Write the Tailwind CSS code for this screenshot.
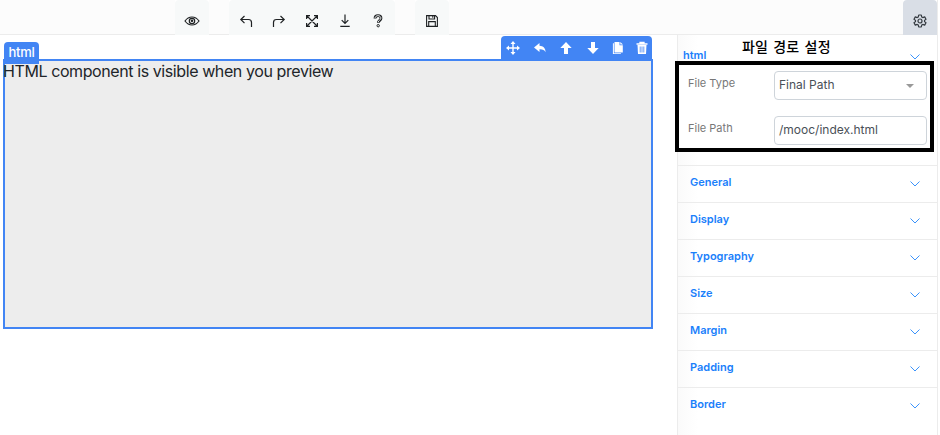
<!DOCTYPE html>
<html lang="ko">
<head>
<meta charset="utf-8">
<title>Page editor</title>
<script src="https://cdn.jsdelivr.net/npm/@tailwindcss/browser@4"></script>
</head>
<body class="w-[940px] h-[435px] overflow-hidden bg-white font-['Inter','Noto_Sans_CJK_KR',sans-serif] text-[#212529]">
<svg class="hidden">
  <symbol id="chev" viewBox="0 0 10 6"><path d="M.5 .5 5 5 9.500 .5" fill="none" stroke="#3b93fb" stroke-width="1"/></symbol>
</svg>
<div class="flex flex-col h-full">
  <header class="flex h-[35px] shrink-0 text-[#1f2224]">
    <div class="w-[175px] bg-[#fcfcfc] border-b border-[#ececec]"></div>
    <div class="w-[34px] bg-[#f7f9f9] rounded-t flex justify-center pt-[14px]">
      <svg class="w-[16px] h-[14px]" viewBox="0 0 16 14" fill="none" stroke="currentColor" stroke-width="1.200"><path d="M1 7C3 4.200 5.300 3 8 3s5 1.200 7 4c-2 2.800-4.300 4-7 4S3 9.800 1 7Z"/><circle cx="8" cy="7" r="2.700"/><circle cx="8" cy="6.800" r=".7" fill="currentColor"/></svg>
    </div>
    <div class="w-[20px] bg-[#fcfcfc] border-b border-[#ececec]"></div>
    <div class="w-[166px] bg-[#f7f9f9] rounded-t flex pt-[14px] pl-[10px] gap-[19px]">
      <svg class="w-[14px] h-[14px]" viewBox="0 0 14 14" fill="none" stroke="currentColor" stroke-width="1.200"><path d="M5.500 2 1.800 5.500l3.700 3.700M1.800 5.500H9.500q3 0 3 3V13"/></svg>
      <svg class="w-[14px] h-[14px]" viewBox="0 0 14 14" fill="none" stroke="currentColor" stroke-width="1.200"><path d="M8.500 2l3.700 3.500-3.700 3.700M12.200 5.500H4.500q-3 0-3 3V13"/></svg>
      <svg class="w-[14px] h-[14px]" viewBox="0 0 14 14" fill="none" stroke="currentColor" stroke-width="1.200"><path d="M1.600 5V1.600H5M9 1.600h3.400V5M12.400 9v3.400H9M5 12.400H1.600V9M2 2l10 10M12 2 2 12"/></svg>
      <svg class="w-[14px] h-[14px]" viewBox="0 0 14 14" fill="none" stroke="currentColor" stroke-width="1.200"><path d="M7 .5V9.500M3.700 6.200 7 9.500l3.300-3.300M2.300 12.400h9.400"/></svg>
      <svg class="w-[14px] h-[14px]" viewBox="0 0 14 14" fill="none"><path d="M4 4.500C4 2.500 5.300 1.600 7 1.600s3 1 3 2.600c0 2.200-2.700 2-2.700 4.500" stroke="#1f2224" stroke-width="2.800"/><path d="M4 4.100C4.200 2.500 5.500 1.700 7 1.700s2.900.9 2.900 2.400c0 2.100-2.600 2-2.600 4" stroke="#f7f9f9" stroke-width=".9"/><circle cx="7.200" cy="11.700" r="1.200" stroke="#1f2224" stroke-width="1"/></svg>
    </div>
    <div class="w-[20px] bg-[#fcfcfc] border-b border-[#ececec]"></div>
    <div class="w-[34px] bg-[#f7f9f9] rounded-t flex justify-center pt-[14px]">
      <svg class="w-[14px] h-[14px]" viewBox="0 0 14 14" fill="none" stroke="currentColor" stroke-width="1.100"><path d="M1.600 1.600h8.900l1.900 1.900v8.900H1.600ZM4 1.600V5h5.600V1.600M7.800 1.800v2M3.700 12.400V7.600h6.600v4.800"/></svg>
    </div>
    <div class="grow bg-[#fcfcfc] border-b border-[#ececec]"></div>
    <div class="w-[34px] bg-[#d9dee6] rounded-t flex justify-center pt-[14px]">
      <svg class="w-[14px] h-[14px]" viewBox="0 0 14 14" fill="none" stroke="#343a40" stroke-width="1.200" stroke-linejoin="round"><path d="M5.700 1h2.600l.4 1.900 1.100.7 1.900-.7 1.300 2.300-1.500 1.200v1.200L13 8.800l-1.300 2.300-1.900-.7-1.100.7-.4 1.900H5.700l-.4-1.900-1.100-.7-1.900.7L1 8.800l1.500-1.200V6.400L1 5.200l1.300-2.300 1.900.7 1.100-.7Z"/><circle cx="7" cy="7" r="2"/></svg>
    </div>
    <div class="w-[3px] border-l border-[#ececec]"></div>
  </header>

  <div class="flex grow min-h-0">
    <main class="w-[677px] pl-[3px] pt-[24px]">
      <section class="relative w-[650px] h-[270px] border-2 border-[#4285f4] bg-[#ededed]">
        <p class="text-[16px] leading-[21px] -ml-[2px] tracking-[-0.41px] whitespace-nowrap">HTML component is visible when you preview</p>
        <div class="absolute -left-px -top-[19px] w-[35px] h-[22px] rounded-t bg-[#4285f4] text-white text-[13px] tracking-[-0.3px] leading-[21px] text-center font-medium">html</div>
        <div class="absolute -right-px -top-[25px] w-[151px] h-[24px] rounded-t bg-[#4285f4] text-white flex items-center pl-[5px] gap-[12.700px]">
          <svg class="w-[14px] h-[14px] shrink-0" viewBox="0 0 14 14" fill="currentColor"><path d="M7 0l2.500 3H7.700v3.300H11V4.500L14 7l-3 2.500V7.700H7.700V11h1.800L7 14l-2.500-3h1.800V7.700H3v1.800L0 7l3-2.500v1.800h3.300V3H4.500Z"/></svg>
          <svg class="w-[14px] h-[14px] shrink-0" viewBox="0 0 14 14" fill="currentColor"><path d="M1 6.500 6.500 2v2.700c3.700.2 6.200 2.200 6 6.600C11.500 9 9.600 8.200 6.500 8.300V11Z"/></svg>
          <svg class="w-[14px] h-[14px] shrink-0" viewBox="0 0 14 14" fill="currentColor"><path d="M7 1l5.700 6H9v6H5V7H1.300Z"/></svg>
          <svg class="w-[14px] h-[14px] shrink-0" viewBox="0 0 14 14" fill="currentColor"><path d="M7 13 1.300 7H5V1h4v6h3.700Z"/></svg>
          <svg class="w-[12px] h-[14px] shrink-0 -ml-px" viewBox="0 0 12 14" fill="currentColor"><path d="M2.500 1h5v3.300h3.300v7.300H2.500Z"/><path d="M8.300 1 11 3.600H8.300ZM.9 2.300h1v9.900h7V13h-8Z"/></svg>
          <svg class="w-[12px] h-[14px] shrink-0" viewBox="0 0 12 14" fill="none" stroke="currentColor"><path d="M.5 3h11M4 2.700V1.500h4v1.200" stroke-width="1.300"/><path d="M1.500 4h9L10 13H2Z" fill="currentColor" stroke="none"/><path d="M4.200 5.500v6M6 5.500v6M7.800 5.500v6" stroke="#4285f4" stroke-width=".8"/></svg>
        </div>
      </section>
    </main>

    <aside class="relative w-[261px] border-x border-[#ececec] bg-linear-to-r from-[#fafafa] to-white to-[8%] text-[11px] font-semibold text-[#1a80fb]">
      <div class="h-[130px]">
        <div class="flex h-[26px] pl-[5px] pr-[17px] justify-between">
          <span class="leading-[14px] pt-[13px]">html</span>
          <svg class="w-[10px] h-[6px] mt-[19px]"><use href="#chev"/></svg>
        </div>
        <div class="-ml-[3px] w-[259px] h-[91px] border-4 border-black bg-white pl-[9px] pt-[6px] flex flex-col gap-[16px] font-normal">
          <div class="flex h-[29px]">
            <span class="w-[86px] leading-[25px] text-[#777]">File Type</span>
            <div class="w-[153px] border border-[#ced4da] rounded pl-[4px] pr-[12px] flex justify-between text-[12px] leading-[26px] text-[#495057]"><span>Final Path</span><svg class="w-[8px] h-[4px] mt-[12px]" viewBox="0 0 8 4"><path d="M0 0h8L4 4Z" fill="#999"/></svg></div>
          </div>
          <div class="flex h-[29px]">
            <span class="w-[86px] leading-[25px] text-[#777]">File Path</span>
            <div class="w-[153px] border border-[#ced4da] rounded pl-[4px] text-[12px] leading-[26px] text-[#495057]">/mooc/index.html</div>
          </div>
        </div>
      </div>
      <div class="[&>div]:h-[37px] [&>div]:border-t [&>div]:border-[#ececec] [&>div]:flex [&>div]:justify-between [&>div]:pl-[12px] [&>div]:pr-[17px] [&>div]:leading-[33px] [&_svg]:w-[10px] [&_svg]:h-[6px] [&_svg]:mt-[15px]">
        <div><span>General</span><svg><use href="#chev"/></svg></div>
        <div><span>Display</span><svg><use href="#chev"/></svg></div>
        <div><span>Typography</span><svg><use href="#chev"/></svg></div>
        <div><span>Size</span><svg><use href="#chev"/></svg></div>
        <div><span>Margin</span><svg><use href="#chev"/></svg></div>
        <div><span>Padding</span><svg><use href="#chev"/></svg></div>
        <div><span>Border</span><svg><use href="#chev"/></svg></div>
      </div>
      <div class="absolute left-[64px] top-[2px] text-[14px] leading-[18px] tracking-[0.2px] [word-spacing:1px] font-medium text-black whitespace-nowrap font-['Noto_Sans_CJK_KR',sans-serif]">파일 경로 설정</div>
    </aside>
  </div>
</div>
</body>
</html>
